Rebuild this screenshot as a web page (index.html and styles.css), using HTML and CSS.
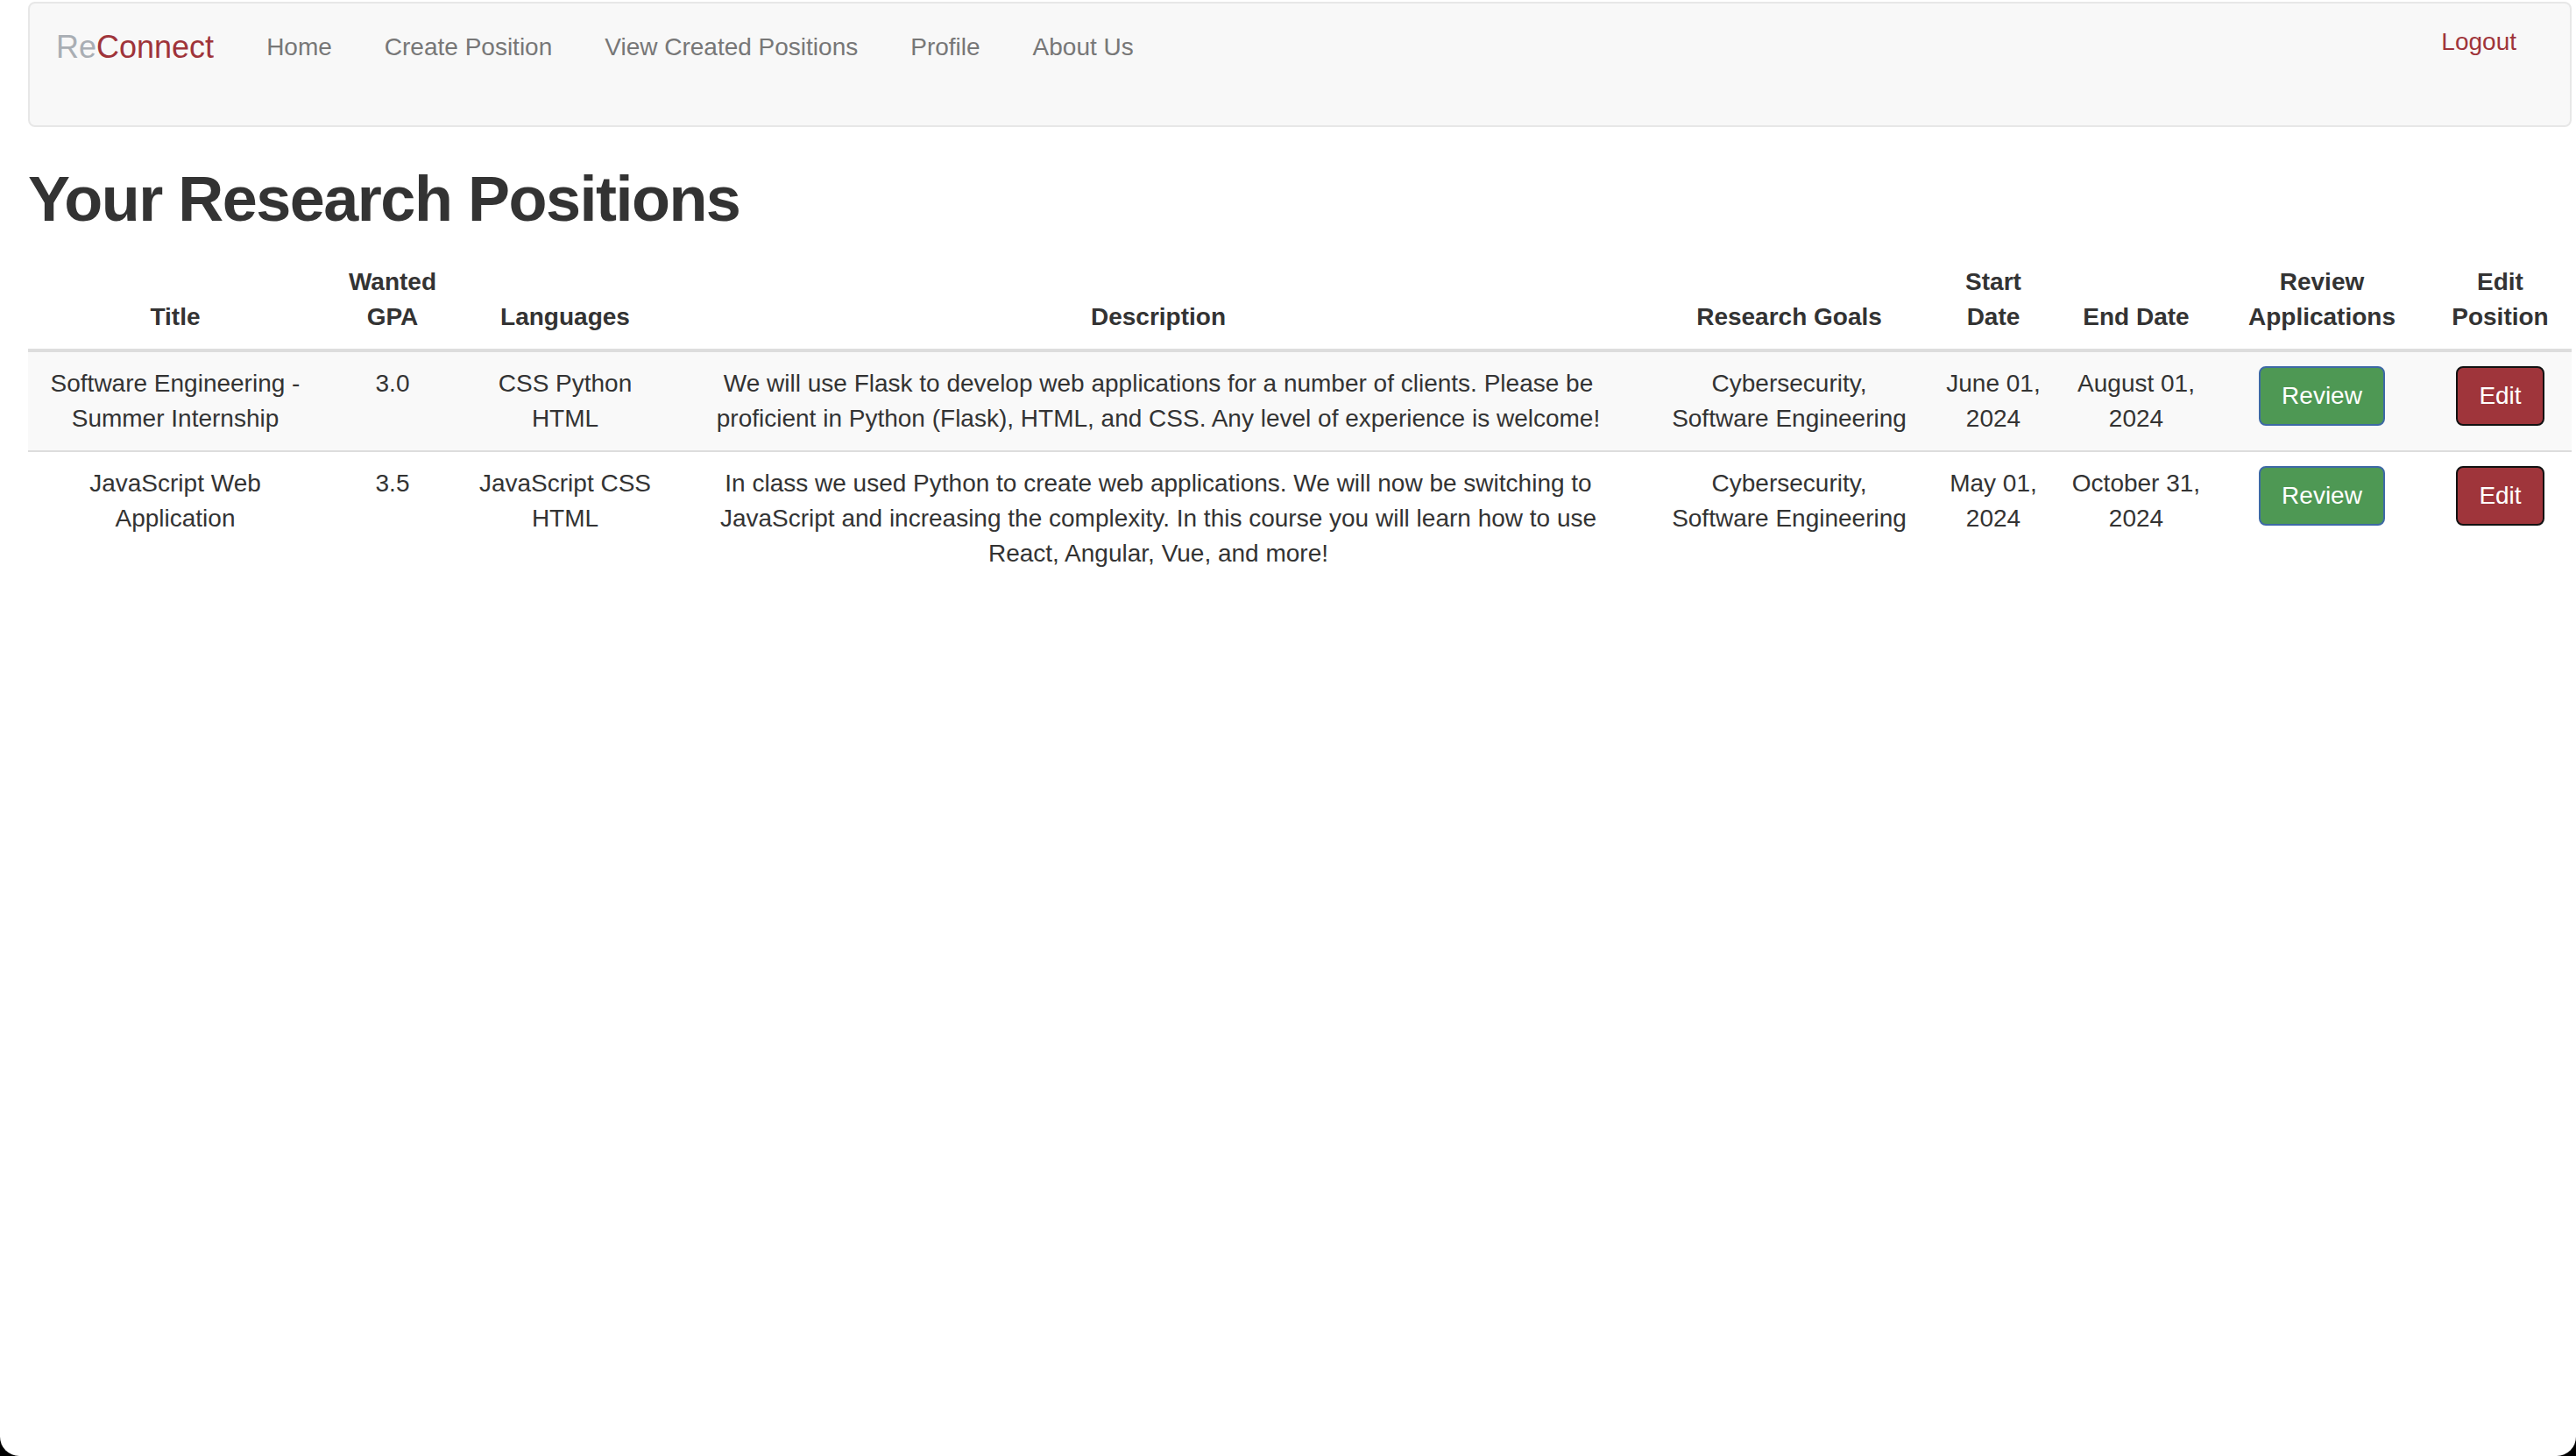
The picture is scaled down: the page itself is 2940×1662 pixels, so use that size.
FILE: index.html
```html
<!DOCTYPE html>
<html lang="en">
<head>
<meta charset="utf-8">
<title>ReConnect - Your Research Positions</title>
<link rel="stylesheet" href="styles.css">
</head>
<body>
<div class="page">
  <nav class="navbar">
    <a class="brand" href="#"><span class="brand-re">Re</span><span class="brand-connect">Connect</span></a>
    <ul class="nav">
      <li><a href="#">Home</a></li>
      <li><a href="#">Create Position</a></li>
      <li><a href="#">View Created Positions</a></li>
      <li><a href="#">Profile</a></li>
      <li><a href="#">About Us</a></li>
    </ul>
    <a class="logout" href="#">Logout</a>
  </nav>

  <h1 class="title">Your Research Positions</h1>

  <table class="positions">
    <colgroup>
      <col class="c-title">
      <col class="c-gpa">
      <col class="c-lang">
      <col class="c-desc">
      <col class="c-goals">
      <col class="c-start">
      <col class="c-end">
      <col class="c-review">
      <col class="c-edit">
    </colgroup>
    <thead>
      <tr>
        <th>Title</th>
        <th>Wanted GPA</th>
        <th>Languages</th>
        <th>Description</th>
        <th>Research Goals</th>
        <th>Start Date</th>
        <th>End Date</th>
        <th>Review Applications</th>
        <th>Edit Position</th>
      </tr>
    </thead>
    <tbody>
      <tr>
        <td>Software Engineering - Summer Internship</td>
        <td>3.0</td>
        <td>CSS Python HTML</td>
        <td>We will use Flask to develop web applications for a number of clients. Please be proficient in Python (Flask), HTML, and CSS. Any level of experience is welcome!</td>
        <td>Cybersecurity, Software Engineering</td>
        <td>June 01, 2024</td>
        <td>August 01, 2024</td>
        <td><a class="btn btn-review" href="#">Review</a></td>
        <td><a class="btn btn-edit" href="#">Edit</a></td>
      </tr>
      <tr>
        <td>JavaScript Web Application</td>
        <td>3.5</td>
        <td>JavaScript CSS HTML</td>
        <td>In class we used Python to create web applications. We will now be switching to JavaScript and increasing the complexity. In this course you will learn how to use React, Angular, Vue, and more!</td>
        <td>Cybersecurity, Software Engineering</td>
        <td>May 01, 2024</td>
        <td>October 31, 2024</td>
        <td><a class="btn btn-review" href="#">Review</a></td>
        <td><a class="btn btn-edit" href="#">Edit</a></td>
      </tr>
    </tbody>
  </table>
</div>
<div class="window-corners"></div>
</body>
</html>
```
FILE: styles.css
```css
html, body {
  margin: 0;
  padding: 0;
  background: #fff;
}

body {
  font-family: "Liberation Sans", Arial, Helvetica, sans-serif;
  font-size: 28px;
  line-height: 40px;
  color: #333;
}

.page {
  padding: 2px 5px 0 32px;
}

/* Navbar */
.navbar {
  display: flex;
  align-items: flex-start;
  box-sizing: border-box;
  height: 143px;
  background: #f8f8f8;
  border: 2px solid #e7e7e7;
  border-radius: 8px;
  margin-bottom: 43px;
}

.brand {
  display: block;
  padding: 30px;
  font-size: 36px;
  line-height: 40px;
  text-decoration: none;
}

.brand-re {
  color: #a9aeb4;
}

.brand-connect {
  color: #9f343a;
}

.nav {
  display: flex;
  list-style: none;
  margin: 0;
  padding: 0;
}

.nav a {
  display: block;
  padding: 30px;
  color: #777;
  text-decoration: none;
}

.logout {
  margin-left: auto;
  padding: 24px 61px 0 30px;
  color: #9f343a;
  text-decoration: none;
}

/* Heading */
.title {
  margin: 0 0 19px;
  font-size: 72px;
  line-height: 79px;
  font-weight: 700;
  letter-spacing: -1.5px;
  color: #333;
}

/* Table */
.positions {
  width: 100%;
  border-collapse: collapse;
  table-layout: fixed;
}

.c-title { width: 336px; }
.c-gpa { width: 160px; }
.c-lang { width: 234px; }
.c-desc { width: 1120px; }
.c-goals { width: 320px; }
.c-start { width: 146px; }
.c-end { width: 180px; }
.c-review { width: 244px; }
.c-edit { width: 163px; }

.positions th,
.positions td {
  padding: 16px;
  text-align: center;
}

.positions th {
  vertical-align: bottom;
  font-weight: 700;
  border-bottom: 4px solid #ddd;
}

.positions td {
  vertical-align: top;
  border-top: 2px solid #ddd;
}

.positions tbody tr:nth-child(odd) {
  background: #f9f9f9;
}

/* Buttons */
.btn {
  display: inline-block;
  padding: 12px 24px;
  font-size: 28px;
  line-height: 40px;
  border: 2px solid transparent;
  border-radius: 8px;
  color: #fff;
  text-decoration: none;
  white-space: nowrap;
}

.btn-review {
  background: #4e9854;
  border-color: #3d69a5;
}

.btn-edit {
  background: #9f353b;
  border-color: #111;
}

/* macOS window rounded bottom corners */
.window-corners {
  position: fixed;
  top: 0;
  left: 0;
  right: 0;
  bottom: 0;
  border-radius: 0 0 22px 22px;
  box-shadow: 0 0 0 60px #000;
  pointer-events: none;
}
```
